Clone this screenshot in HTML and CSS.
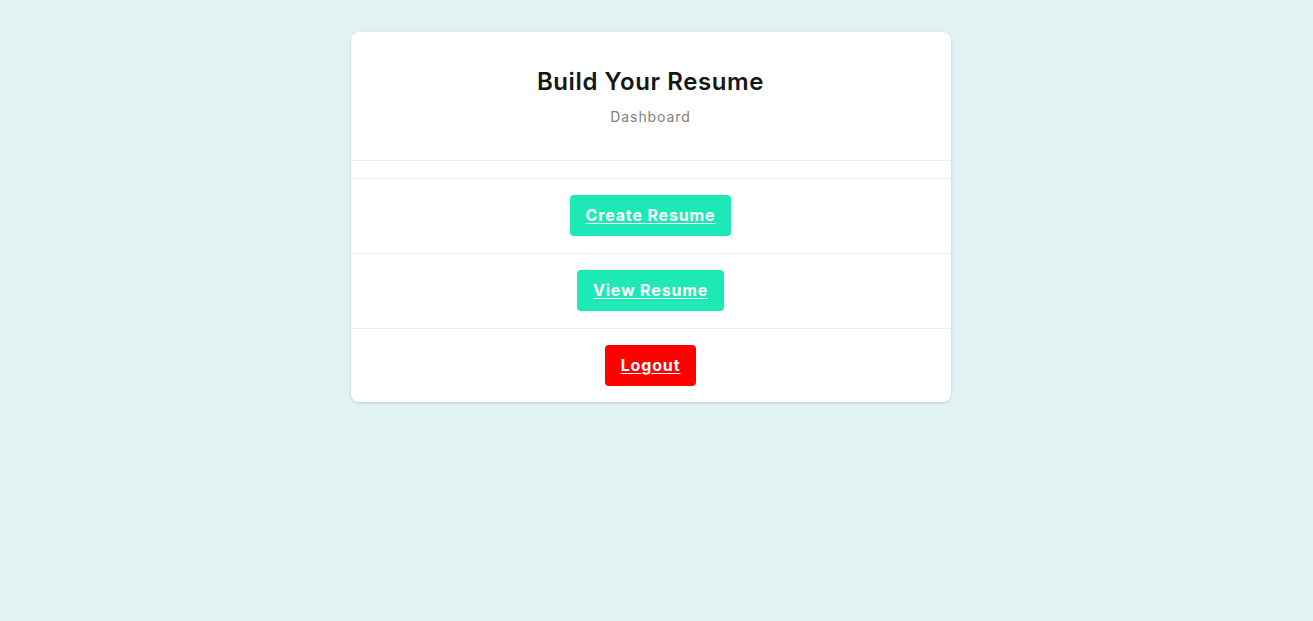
FILE: index.html
```html
<!DOCTYPE html>
<html lang="en">
<head>
<meta charset="utf-8">
<title>Build Your Resume</title>
<link rel="stylesheet" href="styles.css">
</head>
<body>
<main class="page">
  <section class="card">
    <header class="card-header">
      <h1 class="title">Build Your Resume</h1>
      <p class="subtitle">Dashboard</p>
    </header>
    <div class="spacer-row"></div>
    <div class="row"><a class="btn btn-primary" href="#">Create Resume</a></div>
    <div class="row"><a class="btn btn-primary" href="#">View Resume</a></div>
    <div class="row"><a class="btn btn-danger" href="#">Logout</a></div>
  </section>
</main>
</body>
</html>
```
FILE: styles.css
```css
* { box-sizing: border-box; }
html, body { margin: 0; padding: 0; }
body {
  background: #e0f2f1;
  font-family: Inter, "Open Sans", sans-serif;
  min-height: 621px;
}
.page {
  display: flex;
  justify-content: center;
  padding-top: 32px;
  padding-right: 12px;
}
.card {
  width: 600px;
  background: #ffffff;
  border-radius: 8px;
  box-shadow: 0 1px 3px rgba(0, 0, 0, 0.15);
  overflow: hidden;
}
.card-header {
  padding: 32px 16px 33px;
  text-align: center;
  border-bottom: 1px solid #ebebeb;
}
.title {
  margin: 0;
  font-size: 24px;
  line-height: 36px;
  font-weight: 600;
  letter-spacing: 0.6px;
  color: #161616;
}
.subtitle {
  margin: 6px 0 0;
  font-size: 14px;
  line-height: 21px;
  letter-spacing: 0.9px;
  color: #808080;
}
.spacer-row {
  height: 18px;
  border-bottom: 1px solid #ebebeb;
}
.row {
  display: flex;
  justify-content: center;
  padding: 16px 16px 17px;
  border-bottom: 1px solid #ebebeb;
}
.row:last-child { border-bottom: none; padding-bottom: 16px; }
.btn {
  display: inline-block;
  padding: 8px 16px;
  line-height: 25px;
  font-size: 16px;
  font-weight: 700;
  letter-spacing: 0.85px;
  color: #ffffff;
  text-decoration: underline;
  text-underline-offset: 2px;
  border-radius: 4px;
}
.btn-primary { background: #1de9b6; }
.btn-danger { background: #ff0000; }
```
